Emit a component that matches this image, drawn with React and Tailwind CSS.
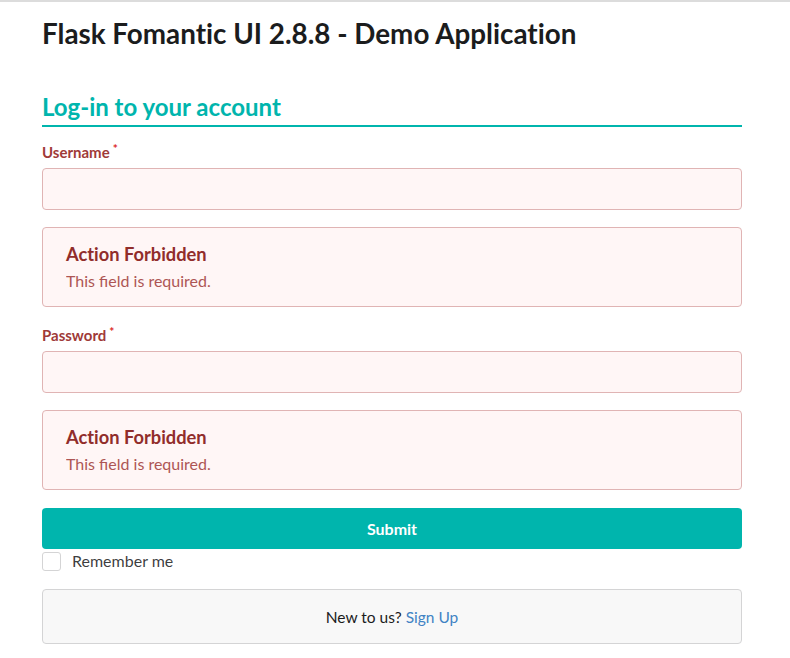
export default function App() {
  const Field = ({ label }) => (
    <div className="flex flex-col">
      <label className="text-[15px] leading-[18px] font-bold text-[#9f3a38] h-[18px]">
        {label}
        <span className="text-[#db2828] text-[12px] align-top ml-[3px] relative -top-[3px]">*</span>
      </label>
      <div className="mt-[7px] h-[42px] rounded-[4px] border border-[#e0b4b4] bg-[#fff6f6]" />
      <div className="mt-[17px] h-[80px] rounded-[4px] border border-[#e0b4b4] bg-[#fff6f6] px-[23px] pt-[15px]">
        <div className="text-[18.3px] leading-[22px] font-bold text-[#912d2b]">Action Forbidden</div>
        <div className="mt-[6px] text-[16px] leading-[20px] text-[#9f3a38] opacity-85 [font-variant-ligatures:common-ligatures]">This field is required.</div>
      </div>
    </div>
  );
  return (
    <div className="min-h-[658px] bg-white border-t-2 border-[#dcdcdc] [font-variant-ligatures:no-common-ligatures]" style={{ fontFamily: "Lato, 'Noto Sans', sans-serif" }}>
      <div className="ml-[42px] w-[700px] flex flex-col">
        <h1 className="pt-[14px] text-[27.8px] leading-[36px] font-bold text-[#1b1c1d]">Flask Fomantic UI 2.8.8 - Demo Application</h1>
        <h2 className="mt-[39px] pb-[3px] text-[24px] leading-[31px] font-bold text-[#00b5ad] border-b-2 border-[#00b5ad]">Log-in to your account</h2>
        <div className="mt-[16px]">
          <Field label="Username" />
        </div>
        <div className="mt-[19px]">
          <Field label="Password" />
        </div>
        <button className="mt-[18px] h-[41px] rounded-[4px] bg-[#00b5ad] text-white text-[16px] font-bold">Submit</button>
        <div className="mt-[2px] flex items-center h-[20px]">
          <div className="w-[19px] h-[19px] rounded-[3px] border border-[#d4d4d5] bg-white" />
          <span className="ml-[11px] text-[16px] text-[#1b1c1d]/87">Remember me</span>
        </div>
        <div className="mt-[18px] h-[55px] rounded-[4px] border border-[#d4d4d5] bg-[#f8f8f8] flex items-center justify-center text-[15.5px] text-[#1b1c1d]">
          <span className="relative top-[1px]">New to us? <a className="text-[#4183c4]">Sign Up</a></span>
        </div>
      </div>
    </div>
  );
}
